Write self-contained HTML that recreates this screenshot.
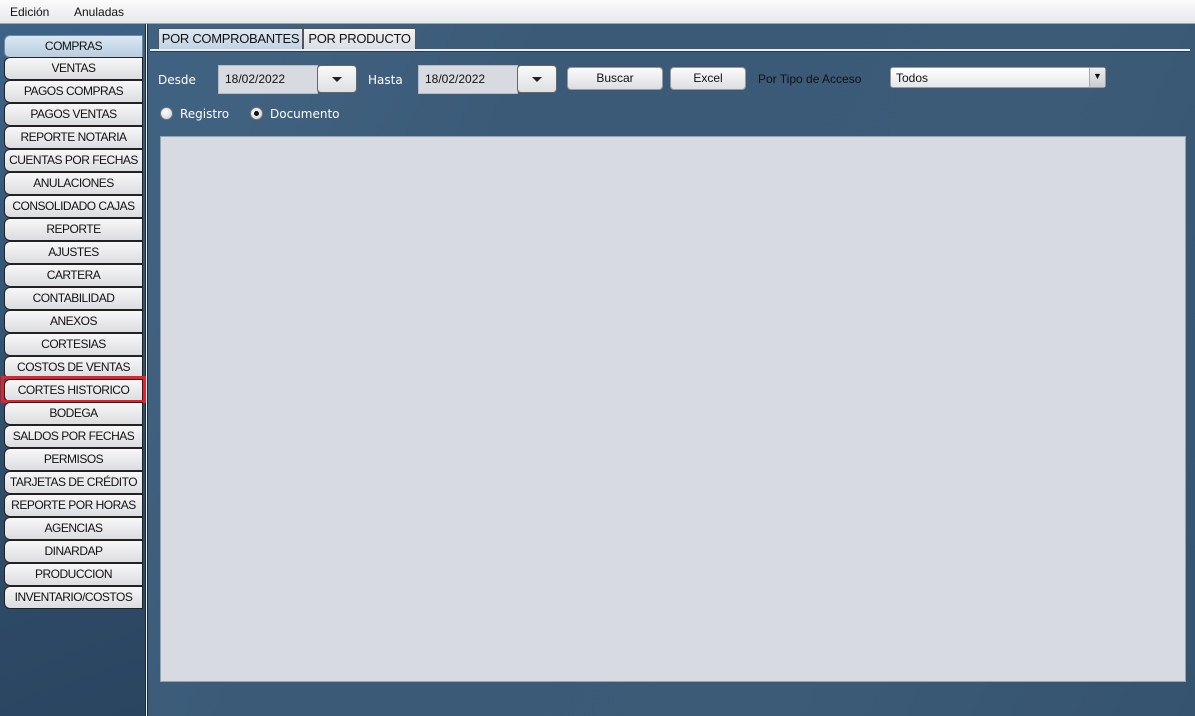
<!DOCTYPE html>
<html><head><meta charset="utf-8"><style>
*{margin:0;padding:0;box-sizing:border-box}
body{width:1195px;height:716px;overflow:hidden;position:relative;font-family:"Liberation Sans",sans-serif;font-size:12px;background:#3a5874}
#menu{position:absolute;left:0;top:0;width:1195px;height:24px;background:linear-gradient(#fbfbfb,#e6e8ea);border-bottom:1px solid #9aa;}
#menu span{position:absolute;top:5px;font-size:12px;color:#111}
#side{position:absolute;left:0;top:24px;width:145px;height:692px;background:linear-gradient(160deg,#3d6386,#2f4d6a 60%,#2a4560)}
#sep{position:absolute;left:145px;top:24px;width:3px;height:692px;background:#f0f4f8;border-left:1px solid #1c2c3c;border-right:1px solid #1c2c3c}
#main{position:absolute;left:148px;top:24px;width:1047px;height:692px;background:linear-gradient(115deg,#3f6283 0%,#40617f 10%,#3a5a78 30%,#3b5b77 70%,#35536f 100%)}
.b{position:absolute;left:4px;width:139px;height:23px;background:linear-gradient(#f7f7f8,#dcdde0);border:1px solid #222;border-radius:6px 0 0 6px;text-align:center;line-height:21px;font-size:12px;letter-spacing:-0.5px;white-space:nowrap;color:#111}
.tab{position:absolute;top:28px;height:21px;background:linear-gradient(#f3f4f6,#dadde2);border:1px solid #555;border-bottom:none;font-size:13px;line-height:20px;text-align:center;color:#111;white-space:nowrap;letter-spacing:-0.3px}
.lbl{position:absolute;color:#fff;font-family:"DejaVu Sans",sans-serif;font-size:12px}
.fld{position:absolute;top:65px;height:29px;background:#d7dbe1;border:1px solid #b7bcc4;font-size:12px;padding:6px 0 0 6px;color:#111}
.dd{position:absolute;top:65px;width:40px;height:28px;background:linear-gradient(#fafafa,#dedfe1);border:1px solid #666;border-radius:4px}
.dd:after{content:"";position:absolute;left:14px;top:11px;border-left:5px solid transparent;border-right:5px solid transparent;border-top:5px solid #222}
.btn{position:absolute;top:67px;height:23px;background:linear-gradient(#fbfbfb,#dcdee2);border:1px solid #999;border-radius:4px;text-align:center;line-height:21px;font-size:12px;color:#111}
.rad{position:absolute;top:107px;width:13px;height:13px;border-radius:50%;background:radial-gradient(circle at 40% 35%,#fff,#c8ccd2);border:1px solid #777}
</style></head><body>
<div id="menu"><span style="left:10px">Edición</span><span style="left:74px">Anuladas</span></div>
<div id="side"></div><div id="sep"></div><div id="main"></div>
<div class="b" style="top:35px;background:linear-gradient(#dbe7f2,#b8cde0);border-color:#6a8aa8">COMPRAS</div>
<div class="b" style="top:57px">VENTAS</div>
<div class="b" style="top:80px">PAGOS COMPRAS</div>
<div class="b" style="top:103px">PAGOS VENTAS</div>
<div class="b" style="top:126px">REPORTE NOTARIA</div>
<div class="b" style="top:149px">CUENTAS POR FECHAS</div>
<div class="b" style="top:172px">ANULACIONES</div>
<div class="b" style="top:195px">CONSOLIDADO CAJAS</div>
<div class="b" style="top:218px">REPORTE</div>
<div class="b" style="top:241px">AJUSTES</div>
<div class="b" style="top:264px">CARTERA</div>
<div class="b" style="top:287px">CONTABILIDAD</div>
<div class="b" style="top:310px">ANEXOS</div>
<div class="b" style="top:333px">CORTESIAS</div>
<div class="b" style="top:356px">COSTOS DE VENTAS</div>
<div class="b" style="top:379px">CORTES HISTORICO</div>
<div style="position:absolute;left:1px;top:376px;width:145px;height:27px;border:3px solid #e8202a"></div>
<div class="b" style="top:402px">BODEGA</div>
<div class="b" style="top:425px">SALDOS POR FECHAS</div>
<div class="b" style="top:448px">PERMISOS</div>
<div class="b" style="top:471px">TARJETAS DE CRÉDITO</div>
<div class="b" style="top:494px">REPORTE POR HORAS</div>
<div class="b" style="top:517px">AGENCIAS</div>
<div class="b" style="top:540px">DINARDAP</div>
<div class="b" style="top:563px">PRODUCCION</div>
<div class="b" style="top:586px">INVENTARIO/COSTOS</div>
<div class="tab" style="left:158px;width:145px;background:linear-gradient(#dde8f3,#c2d3e3)">POR COMPROBANTES</div>
<div class="tab" style="left:303px;width:113px">POR PRODUCTO</div>
<div style="position:absolute;left:150px;top:49px;width:1040px;height:3px;background:#e8eef4;border-bottom:1px solid #2a3e52"></div>
<div class="lbl" style="left:158px;top:73px">Desde</div>
<div class="fld" style="left:218px;width:100px">18/02/2022</div>
<div class="dd" style="left:317px"></div>
<div class="lbl" style="left:368px;top:73px">Hasta</div>
<div class="fld" style="left:418px;width:100px">18/02/2022</div>
<div class="dd" style="left:517px"></div>
<div class="btn" style="left:567px;width:96px">Buscar</div>
<div class="btn" style="left:670px;width:76px">Excel</div>
<div style="position:absolute;left:758px;top:72px;color:#111;font-size:12px">Por Tipo de Acceso</div>
<div style="position:absolute;left:890px;top:67px;width:216px;height:21px;background:linear-gradient(#fff,#e4e6ea);border:1px solid #999;border-radius:3px;font-size:12px;padding:3px 5px;color:#111">Todos<span style="position:absolute;right:0;top:0;width:16px;height:19px;background:linear-gradient(#eee,#c9ccd1);border-left:1px solid #aaa;font-size:9px;text-align:center;line-height:17px">▼</span></div>
<div class="rad" style="left:160px"></div><div class="lbl" style="left:180px;top:107px">Registro</div>
<div class="rad" style="left:250px"><div style="position:absolute;left:3px;top:3px;width:5px;height:5px;border-radius:50%;background:#111"></div></div><div class="lbl" style="left:270px;top:107px">Documento</div>
<div style="position:absolute;left:160px;top:136px;width:1026px;height:546px;background:#d7dbe1;border:1px solid #9aa3ad"></div>
</body></html>
